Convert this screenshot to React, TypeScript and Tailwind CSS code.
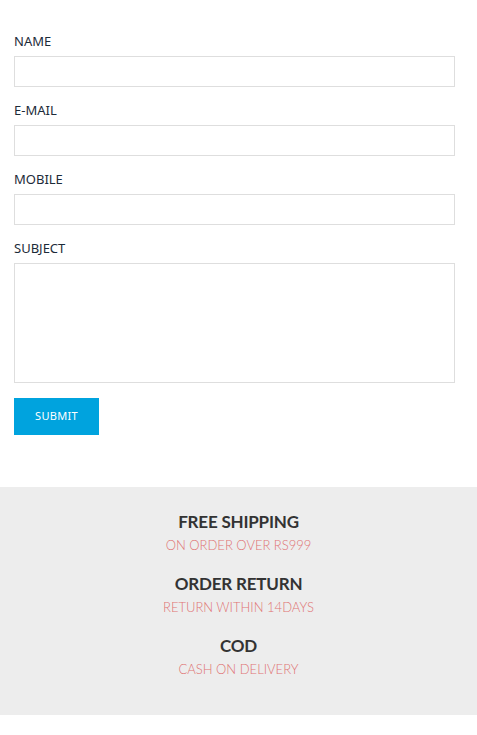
import React from 'react';

const fields = [
    { label: 'NAME', type: 'text' },
    { label: 'E-MAIL', type: 'email' },
    { label: 'MOBILE', type: 'tel' },
];

const perks = [
    { title: 'FREE SHIPPING', note: 'ON ORDER OVER RS999' },
    { title: 'ORDER RETURN', note: 'RETURN WITHIN 14DAYS' },
    { title: 'COD', note: 'CASH ON DELIVERY' },
];

const App: React.FC = () => {
    return (
        <div className="w-[477px] min-h-[735px] bg-white" style={{ fontFamily: '"Noto Sans", "Open Sans", sans-serif' }}>
            {/* Contact form */}
            <form className="pl-[14px] pr-[22px] pt-[32px] pb-[52px]" onSubmit={e => e.preventDefault()}>
                {fields.map(field => (
                    <div key={field.label} className="mb-[14px]">
                        <label className="block text-[13px] leading-[18px] text-[#1c2b39] mb-[6px]">{field.label}</label>
                        <input type={field.type} className="block w-full h-[31px] border border-[#dedede] outline-none px-2 text-sm" />
                    </div>
                ))}
                <div className="mb-[15px]">
                    <label className="block text-[13px] leading-[18px] text-[#1c2b39] mb-[6px]">SUBJECT</label>
                    <textarea className="block w-full h-[120px] border border-[#dedede] outline-none p-2 text-sm resize-none" />
                </div>
                <button type="submit" className="w-[85px] h-[37px] bg-[#00a3de] text-white text-[11px] tracking-[0.3px]">
                    SUBMIT
                </button>
            </form>

            {/* Perks */}
            <div className="bg-[#ededed] h-[228px] pt-[24px] flex flex-col items-center" style={{ fontFamily: 'Lato, "Noto Sans", sans-serif' }}>
                {perks.map(perk => (
                    <div key={perk.title} className="flex flex-col items-center h-[62px]">
                        <div className="text-[17px] leading-[22px] font-bold text-[#333333] tracking-[-0.2px]">{perk.title}</div>
                        <div className="text-[13px] leading-[18px] mt-[3px] font-light text-[#e07474]">{perk.note}</div>
                    </div>
                ))}
            </div>
        </div>
    );
};

export default App;
